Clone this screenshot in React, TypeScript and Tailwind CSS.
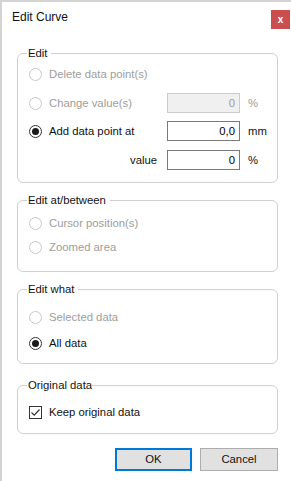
import React from "react";

const font = { fontFamily: '"Liberation Sans", Arial, sans-serif' };

function Radio({ checked, disabled }: { checked?: boolean; disabled?: boolean }) {
  const stroke = disabled ? "#c6c6c6" : "#333333";
  return (
    <svg width="13" height="13" viewBox="0 0 13 13" className="shrink-0">
      <circle cx="6.5" cy="6.5" r="6" fill="#ffffff" stroke={stroke} strokeWidth="1" />
      {checked && <circle cx="6.5" cy="6.5" r="3.5" fill="#1a1a1a" />}
    </svg>
  );
}

function Check() {
  return (
    <svg width="13" height="13" viewBox="0 0 13 13" className="shrink-0">
      <rect x="0.5" y="0.5" width="12" height="12" fill="#ffffff" stroke="#333333" />
      <path d="M2.5 6.5 L5.2 9.2 L10.5 3.5" fill="none" stroke="#333333" strokeWidth="1.2" />
    </svg>
  );
}

function Field({ value, disabled }: { value: string; disabled?: boolean }) {
  return (
    <div
      className={
        "w-[73px] h-[20px] box-border border flex items-center justify-end pr-[4px] " +
        (disabled ? "border-[#cccccc] bg-[#f0f0f0] text-[#9d9d9d]" : "border-[#7a7a7a] bg-white text-black")
      }
    >
      {value}
    </div>
  );
}

export default function App() {
  return (
    <div
      style={font}
      className="w-[291px] h-[481px] box-border border-l-2 border-t-2 border-[#d4d4d4] bg-white text-[11.3px] text-[#111111] overflow-hidden"
    >
      <div className="flex justify-between items-start h-[30px]">
        <div className="ml-[10px] mt-[8px] text-[12px] leading-[14px]">Edit Curve</div>
        <div className="mt-[8px] mr-[1px] w-[19px] h-[19px] bg-[#c94f4f] flex items-center justify-center text-white text-[10px] font-bold leading-none">
          x
        </div>
      </div>

      {/* Edit */}
      <fieldset className="ml-[15px] mt-[14px] w-[261px] h-[137px] box-border border border-[#cfcfcf] rounded-[6px]">
        <legend className="ml-[9px] pl-[1px] pr-[4px] leading-[14px]">Edit</legend>
        <div className="pl-[11px] pt-[4px] flex flex-col">
          <div className="h-[20px] flex items-center">
            <Radio disabled />
            <span className="ml-[7px] text-[#9d9d9d]">Delete data point(s)</span>
          </div>
          <div className="h-[20px] mt-[9px] flex items-center">
            <div className="w-[138px] flex items-center">
              <Radio disabled />
              <span className="ml-[7px] text-[#9d9d9d]">Change value(s)</span>
            </div>
            <Field value="0" disabled />
            <span className="ml-[8px] text-[#9d9d9d]">%</span>
          </div>
          <div className="h-[20px] mt-[8px] flex items-center">
            <div className="w-[138px] flex items-center">
              <Radio checked />
              <span className="ml-[7px]">Add data point at</span>
            </div>
            <Field value="0,0" />
            <span className="ml-[8px]">mm</span>
          </div>
          <div className="h-[20px] mt-[9px] flex items-center">
            <div className="w-[138px] text-right pr-[10px]">value</div>
            <Field value="0" />
            <span className="ml-[8px]">%</span>
          </div>
        </div>
      </fieldset>

      {/* Edit at/between */}
      <fieldset className="ml-[15px] mt-[10px] w-[261px] h-[79px] box-border border border-[#cfcfcf] rounded-[6px]">
        <legend className="ml-[9px] pl-[1px] pr-[4px] leading-[14px]">Edit at/between</legend>
        <div className="pl-[11px] pt-[6px] flex flex-col">
          <div className="h-[20px] flex items-center">
            <Radio disabled />
            <span className="ml-[7px] text-[#9d9d9d]">Cursor position(s)</span>
          </div>
          <div className="h-[20px] mt-[4px] flex items-center">
            <Radio disabled />
            <span className="ml-[7px] text-[#9d9d9d]">Zoomed area</span>
          </div>
        </div>
      </fieldset>

      {/* Edit what */}
      <fieldset className="ml-[15px] mt-[10px] w-[261px] h-[82px] box-border border border-[#cfcfcf] rounded-[6px]">
        <legend className="ml-[9px] pl-[1px] pr-[4px] leading-[14px]">Edit what</legend>
        <div className="pl-[11px] pt-[11px] flex flex-col">
          <div className="h-[20px] flex items-center">
            <Radio disabled />
            <span className="ml-[7px] text-[#9d9d9d]">Selected data</span>
          </div>
          <div className="h-[20px] mt-[6px] flex items-center">
            <Radio checked />
            <span className="ml-[7px]">All data</span>
          </div>
        </div>
      </fieldset>

      {/* Original data */}
      <fieldset className="ml-[15px] mt-[14px] w-[261px] h-[56px] box-border border border-[#cfcfcf] rounded-[6px]">
        <legend className="ml-[9px] pl-[1px] pr-0 leading-[14px]">Original data</legend>
        <div className="pl-[11px] pt-[10px] flex flex-col">
          <div className="h-[20px] flex items-center">
            <Check />
            <span className="ml-[7px]">Keep original data</span>
          </div>
        </div>
      </fieldset>

      <div className="ml-[15px] mt-[14px] w-[261px] flex justify-end gap-[8px]">
        <div className="w-[77px] h-[23px] box-border border-2 border-[#0078d7] bg-[#e1e1e1] flex items-center justify-center">
          OK
        </div>
        <div className="w-[78px] h-[23px] box-border border border-[#adadad] bg-[#e1e1e1] flex items-center justify-center">
          Cancel
        </div>
      </div>
    </div>
  );
}
